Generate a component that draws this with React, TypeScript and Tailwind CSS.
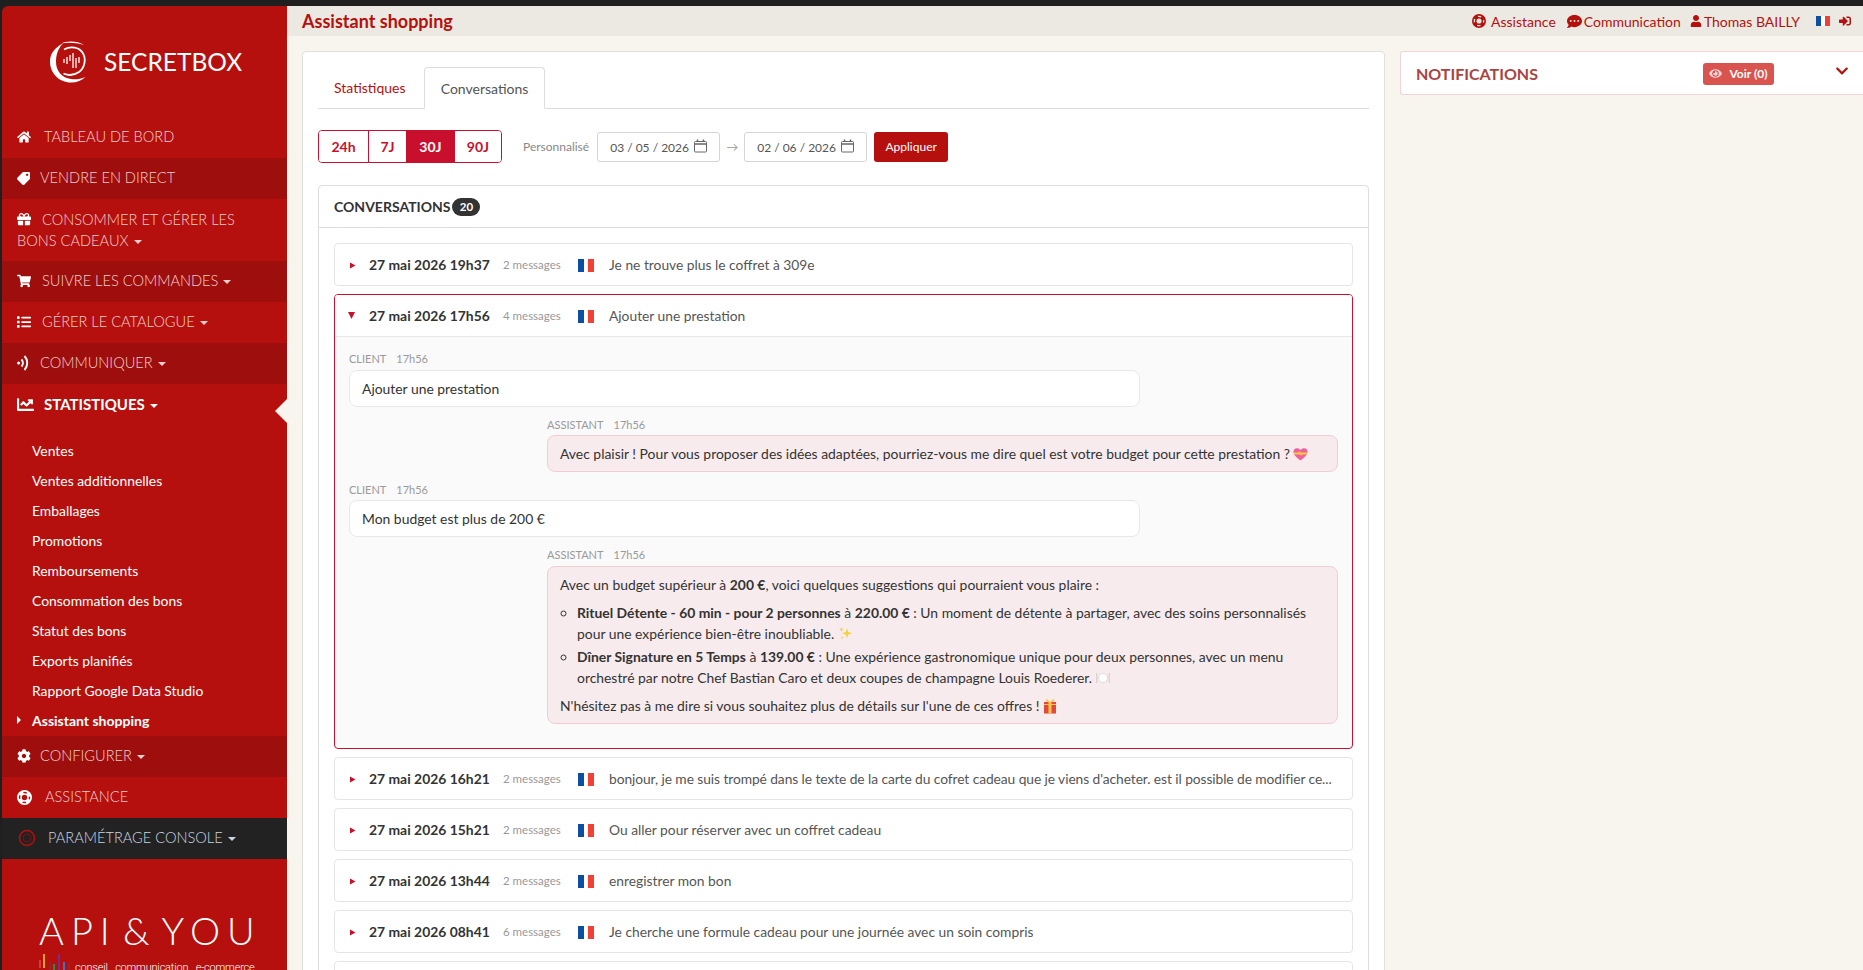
import React from "react";
import { FaHome, FaTag, FaGift, FaShoppingCart, FaList, FaChartLine, FaCog, FaCommentDots, FaUser, FaSignInAlt, FaEye, FaChevronDown } from "react-icons/fa";

const Caret = () => <span className="inline-block ml-[5px] align-middle w-0 h-0 border-t-[4px] border-x-[4px] border-t-current border-x-transparent" />;

const Feed = () => (
  <svg width="13" height="18" viewBox="0 0 13 18" fill="none" stroke="currentColor" strokeWidth="2" className="text-white">
    <circle cx="1.6" cy="9" r="1.5" fill="currentColor" stroke="none" />
    <path d="M4.5 5.5c1.8 2 1.8 5 0 7" />
    <path d="M7.5 2c3.6 3.8 3.6 10.2 0 14" />
  </svg>
);

const LifeRing = ({ size, fg, bg }: { size: number; fg: string; bg: string }) => (
  <svg width={size} height={size} viewBox="0 0 16 16" className="shrink-0">
    <circle cx="8" cy="8" r="8" fill={fg} />
    <circle cx="8" cy="8" r="2.900" fill={bg} />
    <circle cx="8" cy="8" r="5.300" fill="none" stroke={bg} strokeWidth="1.500" strokeDasharray="3.800 4.525" strokeDashoffset="1.900" />
  </svg>
);

const MenuRow = ({ icon, children, dark, bold, gap = "ml-[14px]" }: any) => (
  <div className={`h-[41px] pb-[1px] ${dark ? "bg-[#9e0e0c]" : ""} flex items-center pl-[15px] whitespace-nowrap ${bold ? "text-[15px] font-bold text-white" : "text-[14.600px] font-light text-[#f3cfcf]"}`}>
    <span className="text-white flex items-center">{icon}</span>
    <span className={gap}>{children}</span>
  </div>
);

const subs = ["Ventes", "Ventes additionnelles", "Emballages", "Promotions", "Remboursements", "Consommation des bons", "Statut des bons", "Exports planifiés", "Rapport Google Data Studio"];

const Logo = () => (
  <svg width="44" height="44" viewBox="0 0 44 44" fill="none" stroke="#fff">
    <path d="M14 3.500C5.500 7.500 1 14 1 21.500 1 33 10 42.500 22 42.500c6 0 11-2 14.500-5.500C31 39.500 26 39.500 22 39 13 38 7 31 7 22 7 13 10 7.500 14 3.500Z" fill="#fff" stroke="none" />
    <path d="M12 3.500C17 0.500 29 0.500 35 5 28 3 20 2 12 3.500Z" fill="#fff" stroke="none" />
    <path d="M15 9.500c7-4 15-2 18.500 3 4 6 2.500 15-3.500 19.500-5 3.500-11 3.500-15.500 1.500" strokeWidth="1.800" />
    <g strokeWidth="1.300">
      <path d="M15 19v4M18 17v7M21 15v6M24 13v15M27 18v10M30 17v6" />
    </g>
  </svg>
);

const Sidebar = () => (
  <aside className="w-[285px] shrink-0 bg-[#b5100d] rounded-tl-[6px] relative h-full" style={{ fontFamily: "Lato, sans-serif" }}>
    <div className="h-[111px] pl-[47px] pt-[34px] flex items-start">
      <Logo />
      <span className="ml-[11px] mt-[6px] text-[24.500px] leading-[32px] text-white font-normal">SECRETBOX</span>
    </div>
    <MenuRow icon={<FaHome size={14} />} gap="ml-[13px]">TABLEAU DE BORD</MenuRow>
    <MenuRow dark icon={<FaTag size={13} className="-scale-x-100" />} gap="ml-[10px]">VENDRE EN DIRECT</MenuRow>
    <div className="h-[62px] pl-[15px] pt-[10px] text-[14.600px] leading-[21px] font-light text-[#f3cfcf]">
      <FaGift size={14} className="inline-block text-white mr-[11px] align-[-1px]" />
      CONSOMMER ET GÉRER LES<br />BONS CADEAUX<Caret />
    </div>
    <MenuRow dark icon={<FaShoppingCart size={14} />} gap="ml-[11px]">SUIVRE LES COMMANDES<Caret /></MenuRow>
    <MenuRow icon={<FaList size={14} />} gap="ml-[11px]">GÉRER LE CATALOGUE<Caret /></MenuRow>
    <MenuRow dark icon={<Feed />} gap="ml-[10px]">COMMUNIQUER<Caret /></MenuRow>
    <MenuRow bold icon={<FaChartLine size={17} />} gap="ml-[10px]">STATISTIQUES<Caret /></MenuRow>
    <div className="absolute left-[273px] top-[393px] w-0 h-0 border-y-[12px] border-r-[12px] border-y-transparent border-r-[#f8f5ef]" />
    <div className="pt-[11px]">
      {subs.map((s) => (
        <div key={s} className="h-[30px] leading-[29px] pl-[30px] text-[13.900px] text-white">{s}</div>
      ))}
      <div className="h-[30px] leading-[29px] pl-[30px] text-[14px] text-white font-bold relative">
        <span className="absolute left-[15px] top-[10px] w-0 h-0 border-y-[4px] border-l-[4px] border-y-transparent border-l-white" />
        Assistant shopping
      </div>
    </div>
    <MenuRow dark icon={<FaCog size={14} />} gap="ml-[9px]">CONFIGURER<Caret /></MenuRow>
    <MenuRow icon={<LifeRing size={15} fg="#fff" bg="#b5100d" />} gap="ml-[13px]">ASSISTANCE</MenuRow>
    <div className="h-[41px] pb-[1px] bg-[#222222] flex items-center pl-[16px] text-[14.600px] font-light text-[#c9d6e2] whitespace-nowrap">
      <svg width="18" height="18" viewBox="0 0 18 18" fill="none" stroke="#b5100d">
        <circle cx="9" cy="9" r="7.500" strokeWidth="1.500" />
        <circle cx="9" cy="9" r="4" strokeWidth="1" stroke="#7a0f0d" />
      </svg>
      <span className="ml-[12px]">PARAMÉTRAGE CONSOLE<Caret /></span>
    </div>
    <div className="mt-[52px] pl-[37px] text-white">
      <div className="text-[38px] leading-[38px] font-light tracking-[7px] [word-spacing:-11px] whitespace-nowrap">API &amp; YOU</div>
      <div className="flex items-start mt-[5px] h-[20px]">
        <svg width="34" height="20" viewBox="0 0 34 20" className="shrink-0">
          <rect x="0" y="6" width="2" height="8" fill="#d63a3a" />
          <rect x="4" y="0" width="2" height="14" fill="#e0a020" />
          <rect x="10" y="8" width="2" height="12" fill="#8a2a2a" />
          <rect x="14" y="10" width="2" height="10" fill="#2e8b3a" />
          <rect x="19" y="-2" width="2" height="22" fill="#7a2a8a" />
          <rect x="24" y="8" width="2" height="10" fill="#4a6fc0" />
          <rect x="29" y="9" width="2" height="11" fill="#a02020" />
        </svg>
        <span className="ml-[2px] mt-[6px] text-[11px] leading-[16px] tracking-[-0.200px] whitespace-nowrap font-light" style={{ fontFamily: "Roboto, sans-serif" }}>conseil&nbsp;&nbsp; communication&nbsp;&nbsp; e-commerce</span>
      </div>
    </div>
  </aside>
);

const Flag = () => (
  <span className="flex w-[16px] h-[13px] shrink-0">
    <span className="w-[6px] bg-[#0b4ea2]" />
    <span className="w-[4px] bg-white" />
    <span className="w-[6px] bg-[#ef4135]" />
  </span>
);

const Cal = () => (
  <svg width="13" height="14" viewBox="0 0 13 14" fill="none" stroke="#666" className="absolute right-[12px] top-[6px]">
    <rect x="0.500" y="2.500" width="12" height="10.500" rx="1" />
    <path d="M0.500 5h12" strokeWidth="1.500" />
    <path d="M3.500 0.500v2M9.500 0.500v2" strokeWidth="1.500" />
  </svg>
);

const DateBox = ({ v }: { v: string }) => (
  <div className="relative w-[123px] h-[30px] bg-white border border-[#d5d5d5] rounded-[3px] pl-[12px] text-[12px] leading-[29px] text-[#555] whitespace-nowrap">
    {v}
    <Cal />
  </div>
);

const Pill = ({ children, w, active }: any) => (
  <div className={`${w} h-full flex items-center justify-center text-[14px] font-bold border-r border-[#c8102e] last:border-r-0 ${active ? "bg-[#c8102e] text-white" : "text-[#c8102e] bg-white"}`}>{children}</div>
);

const RowHead = ({ date, msgs, text, open, tight }: any) => (
  <div className={`flex items-center pl-[14px] pr-[15px] pt-[1px] whitespace-nowrap ${open ? "border-b border-[#e8e8e8] h-[42px] bg-white" : "h-[41px]"}`}>
    {open ? (
      <svg width="7" height="7" viewBox="0 0 7 7" className="shrink-0 -mt-[2px] -ml-[1px] mr-[1px]"><path d="M0 0h7L3.500 7Z" fill="#c8102e" /></svg>
    ) : (
      <svg width="7" height="7" viewBox="0 0 7 7" className="shrink-0 mt-[1px]"><path d="M1 0.500L6.500 3.500 1 6.500Z" fill="#c8102e" /></svg>
    )}
    <span className="ml-[13px] w-[120px] shrink-0 text-[13.900px] font-bold text-[#333]">{date}</span>
    <span className="ml-[14px] w-[60px] shrink-0 text-[11.500px] text-[#999]">{msgs}</span>
    <span className="ml-[15px]"><Flag /></span>
    <span className={`ml-[15px] text-[13.800px] text-[#555] min-w-0 truncate ${tight ? "tracking-[-0.080px]" : ""}`}>{text}</span>
  </div>
);

const Row = (p: any) => (
  <div className="border border-[#e5e5e5] rounded-[4px] bg-white h-[43px] mb-[8px]"><RowHead {...p} /></div>
);

const Label = ({ who, right }: any) => (
  <div className={`text-[11px] leading-[14px] text-[#999] ${right ? "ml-[198px]" : ""}`}>{who}<span className="ml-[10px]">17h56</span></div>
);

const Bubble = ({ children, me, first }: any) => (
  <div className={`w-[791px] ${first ? "mt-[4px]" : "mt-[3px]"} border rounded-[8px] px-[12px] py-[7px] text-[13.900px] leading-[21px] text-[#333] ${me ? "ml-[198px] bg-[#f7ebed] border-[#f0cdd3]" : "bg-white border-[#e8e8e8]"}`}>{children}</div>
);

const Heart = () => (
  <svg width="15" height="14" viewBox="0 0 15 14" className="inline-block align-[-2px]">
    <path d="M7.500 13.500C2 9.500 0.500 7 0.500 4.500 0.500 1 5 0 7.500 3 10 0 14.500 1 14.500 4.500 14.500 7 13 9.500 7.500 13.500Z" fill="#f0609a" />
    <path d="M1 6.500h13M6 5l3 3" stroke="#f7c948" strokeWidth="2" />
  </svg>
);
const Sparkle = () => (
  <svg width="15" height="15" viewBox="0 0 15 15" className="inline-block align-[-2px]" fill="#f5d13c">
    <path d="M9 2l1.200 4 4 1.200-4 1.200L9 12.500 7.800 8.400 3.800 7.200l4-1.200Z" />
    <path d="M3.500 1l.6 1.800L6 3.400l-1.900.6L3.500 6 2.900 4 1 3.400l1.900-.6Z" />
    <path d="M4 10l.4 1.300 1.300.4-1.300.4L4 13.500l-.4-1.400-1.300-.4 1.300-.4Z" />
  </svg>
);
const Plate = () => (
  <svg width="14" height="14" viewBox="0 0 14 14" className="inline-block align-[-2px]">
    <circle cx="7" cy="7" r="4.500" fill="#fff" stroke="#ddd" />
    <path d="M0.800 2v10M13.200 2v10" stroke="#ccc" />
  </svg>
);
const Gift = () => (
  <svg width="14" height="16" viewBox="0 0 14 16" className="inline-block align-[-3px]">
    <rect x="1" y="4" width="12" height="11.500" fill="#e2483d" />
    <rect x="5.500" y="4" width="3" height="11.500" fill="#f7c948" />
    <path d="M1 6.500h12" stroke="#f7c948" />
    <path d="M7 4C4 0 2 1 3 3.500ZM7 4c3-4 5-3 4-.5Z" fill="#f7c948" />
  </svg>
);

const Open = () => (
  <div className="border border-[#c8102e] rounded-[4px] h-[455px] mb-[8px] bg-[#fafafa] overflow-hidden">
    <RowHead open date="27 mai 2026 17h56" msgs="4 messages" text="Ajouter une prestation" />
    <div className="px-[14px] pt-[15px]">
      <Label who="CLIENT" />
      <Bubble first>Ajouter une prestation</Bubble>
      <div className="mt-[11px]"><Label right who="ASSISTANT" /></div>
      <Bubble me>Avec plaisir ! Pour vous proposer des idées adaptées, pourriez-vous me dire quel est votre budget pour cette prestation ? <Heart /></Bubble>
      <div className="mt-[11px]"><Label who="CLIENT" /></div>
      <Bubble>Mon budget est plus de 200 €</Bubble>
      <div className="mt-[11px]"><Label right who="ASSISTANT" /></div>
      <Bubble me first>
        <p>Avec un budget supérieur à <b>200 €</b>, voici quelques suggestions qui pourraient vous plaire :</p>
        <ul className="list-[circle] pl-[17px] mt-[7px] mb-[7px]">
          <li><b>Rituel Détente - 60 min - pour 2 personnes</b> à <b>220.00 €</b> : Un moment de détente à partager, avec des soins personnalisés pour une expérience bien-être inoubliable. <Sparkle /></li>
          <li className="mt-[2px]"><b>Dîner Signature en 5 Temps</b> à <b>139.00 €</b> : Une expérience gastronomique unique pour deux personnes, avec un menu orchestré par notre Chef Bastian Caro et deux coupes de champagne Louis Roederer. <Plate /></li>
        </ul>
        <p>N'hésitez pas à me dire si vous souhaitez plus de détails sur l'une de ces offres ! <Gift /></p>
      </Bubble>
    </div>
  </div>
);

export default function App() {
  return (
    <div className="h-[970px] w-[1863px] overflow-hidden bg-[#1f1f1f] flex flex-col" style={{ fontFamily: "Lato, sans-serif" }}>
      <div className="h-[6px] shrink-0" />
      <div className="flex flex-1 min-h-0 pl-[2px]">
        <Sidebar />
        <main className="flex-1 min-w-0 bg-[#f8f5ef] flex flex-col">
          <header className="h-[30px] shrink-0 bg-[#ece9e2] flex items-center pl-[15px] pr-[12px]">
            <h1 className="text-[18px] font-bold text-[#b5100d]">Assistant shopping</h1>
            <nav className="ml-auto flex items-center text-[14px] text-[#b5100d] whitespace-nowrap">
              <LifeRing size={14} fg="#b5100d" bg="#ece9e2" />
              <span className="ml-[5px]">Assistance</span>
              <FaCommentDots size={15} className="ml-[11px]" />
              <span className="ml-[2px]">Communication</span>
              <FaUser size={12} className="ml-[9px]" />
              <span className="ml-[2px]">Thomas BAILLY</span>
              <span className="ml-[16px] flex w-[14px] h-[10px]"><span className="w-[5px] bg-[#0b4ea2]" /><span className="w-[4px] bg-white" /><span className="w-[5px] bg-[#ef4135]" /></span>
              <FaSignInAlt size={12} className="ml-[9px]" />
            </nav>
          </header>
          <div className="flex-1 min-h-0 pl-[15px] pt-[15px] flex items-start gap-[15px]">
            <section className="w-[1083px] shrink-0 h-[1000px] bg-white border border-[#e3e0da] rounded-[4px] p-[15px]">
              <div className="flex items-end h-[42px] border-b border-[#ddd] pl-[16px]">
                <div className="w-[90px] h-[41px] leading-[42px] text-[14px] text-[#b5100d]">Statistiques</div>
                <div className="w-[121px] h-[42px] leading-[41px] text-center text-[14px] text-[#555] bg-white border border-[#ddd] border-b-white rounded-t-[4px] -mb-px">Conversations</div>
              </div>
              <div className="flex items-center mt-[21px] h-[33px]">
                <div className="flex w-[184px] h-[33px] border border-[#c8102e] rounded-[4px] overflow-hidden">
                  <Pill w="w-[50px]">24h</Pill>
                  <Pill w="w-[38px]">7J</Pill>
                  <Pill w="w-[48px]" active>30J</Pill>
                  <Pill w="flex-1">90J</Pill>
                </div>
                <span className="ml-[21px] text-[12px] text-[#888] whitespace-nowrap">Personnalisé</span>
                <div className="ml-[8px]"><DateBox v="03 / 05 / 2026" /></div>
                <span className="w-[24px] text-center text-[12px] text-[#999]">→</span>
                <DateBox v="02 / 06 / 2026" />
                <button className="ml-[7px] w-[74px] h-[30px] bg-[#b5100d] text-white text-[12px] rounded-[3px]">Appliquer</button>
              </div>
              <div className="mt-[22px] border border-[#ddd] rounded-[4px] h-[900px]">
                <div className="h-[42px] border-b border-[#ddd] pl-[15px] flex items-center text-[14px] font-bold text-[#333]">
                  CONVERSATIONS
                  <span className="ml-[2px] w-[28px] h-[18px] rounded-full bg-[#333] text-white text-[11.500px] font-bold flex items-center justify-center">20</span>
                </div>
                <div className="px-[15px] pt-[15px]">
                  <Row date="27 mai 2026 19h37" msgs="2 messages" text="Je ne trouve plus le coffret à 309e" />
                  <Open />
                  <Row tight date="27 mai 2026 16h21" msgs="2 messages" text="bonjour, je me suis trompé dans le texte de la carte du cofret cadeau que je viens d'acheter. est il possible de modifier ce..." />
                  <Row date="27 mai 2026 15h21" msgs="2 messages" text="Ou aller pour réserver avec un coffret cadeau" />
                  <Row date="27 mai 2026 13h44" msgs="2 messages" text="enregistrer mon bon" />
                  <Row date="27 mai 2026 08h41" msgs="6 messages" text="Je cherche une formule cadeau pour une journée avec un soin compris" />
                  <Row date="" msgs="" text="" />
                </div>
              </div>
            </section>
            <aside className="flex-1 min-w-0 h-[44px] pt-[1px] bg-white border border-[#efd5d8] border-r-0 rounded-l-[3px] flex items-center pl-[15px] pr-[14px]">
              <span className="text-[16px] font-bold text-[#a94442]">NOTIFICATIONS</span>
              <span className="ml-[165px] w-[71px] h-[22px] bg-[#d9534f] rounded-[3px] text-white text-[12px] font-bold flex items-center justify-center gap-[7px]"><FaEye size={13} className="text-[#f6d5d4]" />Voir (0)</span>
              <FaChevronDown size={14} className="ml-auto -mt-[5px] text-[#b5100d]" />
            </aside>
          </div>
        </main>
      </div>
    </div>
  );
}
